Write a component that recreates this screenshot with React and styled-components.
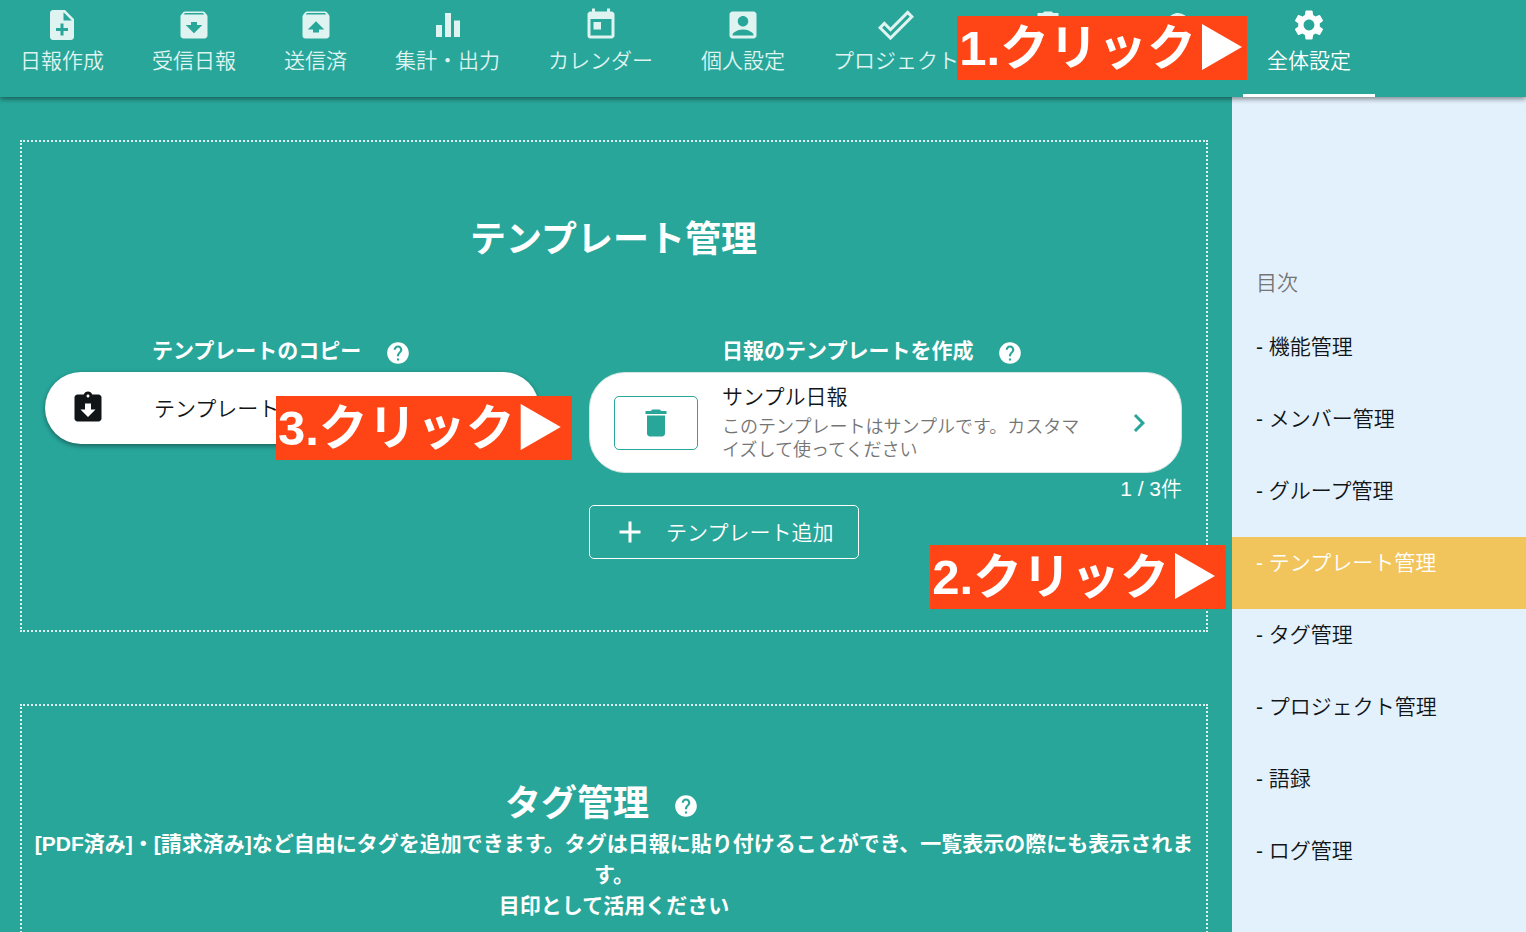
import React, { useState } from "react";
import styled, { createGlobalStyle, ThemeProvider } from "styled-components";
import {
  MdAccountBox,
  MdAdd,
  MdArchive,
  MdAssignmentReturned,
  MdChevronRight,
  MdCloud,
  MdDelete,
  MdEqualizer,
  MdHelp,
  MdNoteAdd,
  MdSettings,
  MdToday,
  MdUnarchive,
} from "react-icons/md";

const theme = {
  colors: {
    teal: "#28a69a",
    white: "#ffffff",
    ink: "#111517",
    grey: "#757575",
    side_blue: "#e3f1fd",
    active_yellow: "#f2c55c",
    badge_red: "#ff4516",
    tab_text: "#dff3f0",
  },
};

const GlobalStyle = createGlobalStyle`
  * {
    box-sizing: border-box;
  }
  body {
    margin: 0;
    font-family: "Liberation Sans", "Noto Sans CJK JP", sans-serif;
    font-size: 21px;
    font-weight: 350;
    line-height: 31px;
    background-color: ${(props) => props.theme.colors.teal};
  }
  button {
    font: inherit;
    cursor: pointer;
  }
  h2, h3, p, ul {
    margin: 0;
    padding: 0;
  }
`;

const StyledPage = styled.div`
  display: flex;
  flex-direction: column;
  height: 100vh;
  overflow: hidden;
`;

const StyledHeader = styled.header`
  position: relative;
  z-index: 2;
  flex: none;
  background-color: ${(props) => props.theme.colors.teal};
  box-shadow: 0 2px 5px rgba(0, 0, 0, 0.45);
`;

const StyledNav = styled.nav`
  display: flex;
  height: 97px;
  margin-left: -4px;
`;

const StyledTab = styled.a`
  position: relative;
  display: flex;
  flex: none;
  flex-direction: column;
  align-items: center;
  min-width: 111px;
  padding: 7px 24px 0;
  color: ${(props) =>
    props.$active ? props.theme.colors.white : props.theme.colors.tab_text};
  border-bottom: 3px solid
    ${(props) => (props.$active ? props.theme.colors.white : "transparent")};
  text-decoration: none;
  white-space: nowrap;
  svg {
    flex: none;
    width: 36px;
    height: 36px;
  }
`;

const StyledIconTab = styled(StyledTab)`
  width: 130px;
`;

const StyledTabLabel = styled.span`
  margin-top: 2px;
`;

const StyledBody = styled.div`
  display: flex;
  flex: 1;
  min-height: 0;
`;

const StyledMain = styled.main`
  flex: 1;
  min-width: 0;
  padding: 43px 24px 72px 20px;
  overflow-y: auto;
  scrollbar-width: none;
`;

const StyledSection = styled.section`
  min-height: 492px;
  padding: 74px 24px 60px 23px;
  margin-bottom: 72px;
  color: ${(props) => props.theme.colors.white};
  border: 2px dotted rgba(255, 255, 255, 0.85);
`;

const StyledTagSection = styled(StyledSection)`
  padding: 74px 10px 60px;
`;

const StyledTitle = styled.h2`
  display: flex;
  justify-content: center;
  align-items: center;
  gap: 24px;
  font-size: 36px;
  font-weight: 700;
  line-height: 48px;
  svg {
    margin-right: 24px;
  }
`;

const StyledLead = styled.p`
  font-weight: 700;
  text-align: center;
`;

const StyledColumns = styled.div`
  display: grid;
  grid-template-columns: 5fr 6fr;
  gap: 50px;
  align-items: start;
  margin-top: 71px;
`;

const StyledColumnTitle = styled.h3`
  display: flex;
  align-items: center;
  gap: 24px;
  padding-left: ${(props) => props.$indent}px;
  margin-bottom: 6px;
  font-size: 21px;
  font-weight: 700;
`;

const StyledHelp = styled(MdHelp)`
  flex: none;
  width: 26px;
  height: 26px;
  margin-top: 4px;
`;

const StyledCopyWrap = styled.div`
  position: relative;
`;

const StyledCopyButton = styled.button`
  display: flex;
  align-items: center;
  gap: 48px;
  width: 100%;
  height: 72px;
  padding: 0 25px;
  color: ${(props) => props.theme.colors.ink};
  background-color: ${(props) => props.theme.colors.white};
  border: none;
  border-radius: 36px;
  box-shadow: 0 2px 5px rgba(0, 0, 0, 0.4);
  svg {
    width: 36px;
    height: 36px;
  }
`;

const StyledTemplateCard = styled.div`
  display: flex;
  align-items: center;
  gap: 24px;
  height: 101px;
  padding: 0 24px;
  color: ${(props) => props.theme.colors.ink};
  background-color: ${(props) => props.theme.colors.white};
  border: 1px solid #d5e5e3;
  border-radius: 36px;
`;

const StyledDeleteButton = styled.button`
  display: flex;
  flex: none;
  justify-content: center;
  align-items: center;
  width: 84px;
  height: 54px;
  color: ${(props) => props.theme.colors.teal};
  background: none;
  border: 1px solid;
  border-radius: 5px;
  svg {
    width: 36px;
    height: 36px;
  }
`;

const StyledTemplateText = styled.div`
  flex: 1;
  padding-bottom: 2px;
  white-space: nowrap;
`;

const StyledTemplateNote = styled.p`
  margin-top: 4px;
  font-size: 18px;
  line-height: 23px;
  color: ${(props) => props.theme.colors.grey};
`;

const StyledOpenButton = styled.button`
  display: flex;
  flex: none;
  padding: 0;
  color: ${(props) => props.theme.colors.teal};
  background: none;
  border: none;
  svg {
    width: 36px;
    height: 36px;
  }
`;

const StyledCount = styled.p`
  text-align: right;
`;

const StyledAddButton = styled.button`
  display: flex;
  align-items: center;
  gap: 18px;
  height: 54px;
  padding: 0 25px 0 22px;
  margin-top: 1px;
  color: ${(props) => props.theme.colors.white};
  background: none;
  border: 1px solid;
  border-radius: 5px;
  svg {
    width: 36px;
    height: 36px;
  }
`;

const StyledSideBar = styled.aside`
  flex: none;
  width: 294px;
  padding-top: 160px;
  background-color: ${(props) => props.theme.colors.side_blue};
`;

const StyledSideTitle = styled.p`
  height: 64px;
  padding: 10px 24px;
  color: ${(props) => props.theme.colors.grey};
`;

const StyledSideList = styled.ul`
  list-style: none;
`;

const StyledSideItem = styled.li`
  position: relative;
`;

const StyledSideLink = styled.a`
  display: block;
  height: 72px;
  padding: 10px 24px;
  color: ${(props) =>
    props.$active ? props.theme.colors.white : props.theme.colors.ink};
  background-color: ${(props) =>
    props.$active ? props.theme.colors.active_yellow : "transparent"};
  text-decoration: none;
`;

const StyledBadge = styled.div`
  position: absolute;
  z-index: 3;
  height: 64px;
  padding: 2px 8px 0 2px;
  font-size: 49px;
  font-weight: 700;
  line-height: 60px;
  white-space: nowrap;
  color: ${(props) => props.theme.colors.white};
  background-color: ${(props) => props.theme.colors.badge_red};
`;

const StyledTabBadge = styled(StyledBadge)`
  top: 16px;
  right: calc(100% - 4px);
  padding: 2px 2px 0;
`;

const StyledSideBadge = styled(StyledBadge)`
  top: 8px;
  right: calc(100% + 6px);
`;

const StyledCopyBadge = styled(StyledBadge)`
  top: 24px;
  left: 231px;
`;

const CheckOutlineIcon = () => (
  <svg viewBox="0 0 24 24" fill="currentColor">
    <path d="M19.78,2.2L24,6.44L8.33,22.11L0,13.78L4.22,9.55L8.33,13.65L19.78,2.2M19.78,5L8.33,16.5L4.22,12.38L2.81,13.78L8.33,19.3L21.19,6.44L19.78,5Z" />
  </svg>
);

const tabs = [
  { id: "create", label: "日報作成", icon: MdNoteAdd },
  { id: "inbox", label: "受信日報", icon: MdArchive },
  { id: "sent", label: "送信済", icon: MdUnarchive },
  { id: "summary", label: "集計・出力", icon: MdEqualizer },
  { id: "calendar", label: "カレンダー", icon: MdToday },
  { id: "personal", label: "個人設定", icon: MdAccountBox },
  { id: "project", label: "プロジェクト", icon: CheckOutlineIcon },
];

const sideItems = [
  "機能管理",
  "メンバー管理",
  "グループ管理",
  "テンプレート管理",
  "タグ管理",
  "プロジェクト管理",
  "語録",
  "ログ管理",
];

export default function App() {
  const [selected, setSelected] = useState("テンプレート管理");

  return (
    <ThemeProvider theme={theme}>
      <GlobalStyle />
      <StyledPage>
        <StyledHeader>
          <StyledNav>
            {tabs.map(({ id, label, icon: Icon }) => (
              <StyledTab key={id} href={`#${id}`}>
                <Icon />
                <StyledTabLabel>{label}</StyledTabLabel>
              </StyledTab>
            ))}
            <StyledIconTab href="#trash" aria-label="ゴミ箱">
              <MdDelete />
            </StyledIconTab>
            <StyledIconTab href="#cloud" aria-label="クラウド">
              <MdCloud />
            </StyledIconTab>
            <StyledTab href="#settings" $active>
              <MdSettings />
              <StyledTabLabel>全体設定</StyledTabLabel>
              <StyledTabBadge>1.クリック▶</StyledTabBadge>
            </StyledTab>
          </StyledNav>
        </StyledHeader>
        <StyledBody>
          <StyledMain>
            <StyledSection>
              <StyledTitle>テンプレート管理</StyledTitle>
              <StyledColumns>
                <div>
                  <StyledColumnTitle $indent={107}>
                    テンプレートのコピー
                    <StyledHelp />
                  </StyledColumnTitle>
                  <StyledCopyWrap>
                    <StyledCopyButton>
                      <MdAssignmentReturned />
                      テンプレート
                    </StyledCopyButton>
                    <StyledCopyBadge>3.クリック▶</StyledCopyBadge>
                  </StyledCopyWrap>
                </div>
                <div>
                  <StyledColumnTitle $indent={133}>
                    日報のテンプレートを作成
                    <StyledHelp />
                  </StyledColumnTitle>
                  <StyledTemplateCard>
                    <StyledDeleteButton aria-label="削除">
                      <MdDelete />
                    </StyledDeleteButton>
                    <StyledTemplateText>
                      サンプル日報
                      <StyledTemplateNote>
                        このテンプレートはサンプルです。カスタマ
                        <br />
                        イズして使ってください
                      </StyledTemplateNote>
                    </StyledTemplateText>
                    <StyledOpenButton aria-label="開く">
                      <MdChevronRight />
                    </StyledOpenButton>
                  </StyledTemplateCard>
                  <StyledCount>1 / 3件</StyledCount>
                  <StyledAddButton>
                    <MdAdd />
                    テンプレート追加
                  </StyledAddButton>
                </div>
              </StyledColumns>
            </StyledSection>
            <StyledTagSection>
              <StyledTitle>
                タグ管理
                <StyledHelp />
              </StyledTitle>
              <StyledLead>
                [PDF済み]・[請求済み]など自由にタグを追加できます。タグは日報に貼り付けることができ、一覧表示の際にも表示されます。
                <br />
                目印として活用ください
              </StyledLead>
            </StyledTagSection>
          </StyledMain>
          <StyledSideBar>
            <StyledSideTitle>目次</StyledSideTitle>
            <StyledSideList>
              {sideItems.map((item) => (
                <StyledSideItem key={item}>
                  <StyledSideLink
                    href={`#${item}`}
                    $active={item === selected}
                    onClick={() => setSelected(item)}
                  >
                    - {item}
                  </StyledSideLink>
                  {item === "テンプレート管理" && (
                    <StyledSideBadge>2.クリック▶</StyledSideBadge>
                  )}
                </StyledSideItem>
              ))}
            </StyledSideList>
          </StyledSideBar>
        </StyledBody>
      </StyledPage>
    </ThemeProvider>
  );
}
